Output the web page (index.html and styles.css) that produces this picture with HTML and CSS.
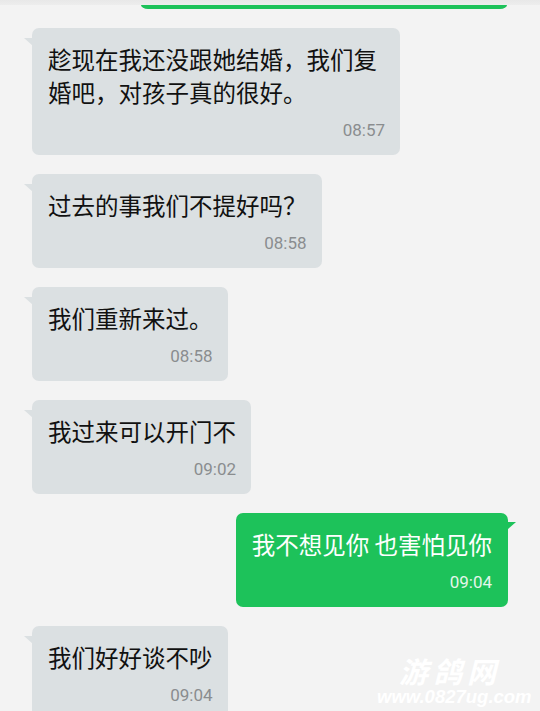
FILE: index.html
```html
<!DOCTYPE html>
<html lang="zh-CN">
<head>
<meta charset="utf-8">
<title>聊天</title>
<link rel="stylesheet" href="styles.css">
</head>
<body>
<div class="screen">
  <div class="topbar"></div>
  <div class="prev-row"><div class="prev-stub"></div></div>
  <div class="list">
    <div class="row in">
      <div class="bubble in">
        <p class="text">趁现在我还没跟她结婚，我们复婚吧，对孩子真的很好。</p>
        <span class="time">08:57</span>
      </div>
    </div>
    <div class="row in">
      <div class="bubble in">
        <p class="text">过去的事我们不提好吗？</p>
        <span class="time">08:58</span>
      </div>
    </div>
    <div class="row in">
      <div class="bubble in">
        <p class="text">我们重新来过。</p>
        <span class="time">08:58</span>
      </div>
    </div>
    <div class="row in">
      <div class="bubble in">
        <p class="text">我过来可以开门不</p>
        <span class="time">09:02</span>
      </div>
    </div>
    <div class="row out">
      <div class="bubble out">
        <p class="text">我不想见你 也害怕见你</p>
        <span class="time">09:04</span>
      </div>
    </div>
    <div class="row in">
      <div class="bubble in">
        <p class="text">我们好好谈不吵</p>
        <span class="time">09:04</span>
      </div>
    </div>
  </div>
  <div class="watermark">
    <div class="wm-name">游鸽网</div>
    <div class="wm-url">www.0827ug.com</div>
  </div>
</div>
</body>
</html>
```
FILE: styles.css
```css
* { box-sizing: border-box; }
html, body {
  margin: 0;
  padding: 0;
  background: #f3f3f3;
}
.screen {
  position: relative;
  width: 540px;
  height: 711px;
  overflow: hidden;
  background: #f3f3f3;
  font-family: "Noto Sans CJK SC", "Noto Sans", sans-serif;
}
.topbar {
  height: 5px;
  background: linear-gradient(#e8e8e8, #ededed);
}
.prev-row {
  display: flex;
  justify-content: flex-end;
  padding-right: 33px;
}
.prev-stub {
  width: 366px;
  height: 4px;
  background: #1dc25a;
  border-radius: 0 0 7px 7px / 0 0 4px 4px;
}
.list {
  display: flex;
  flex-direction: column;
  gap: 19px;
  padding-top: 19px;
}
.row {
  display: flex;
}
.row.in {
  justify-content: flex-start;
  padding-left: 32px;
}
.row.out {
  justify-content: flex-end;
  padding-right: 32px;
}
.bubble {
  position: relative;
  max-width: 368px;
  border-radius: 7px;
  padding: 15px 15px 15px 16px;
  display: flex;
  flex-direction: column;
}
.bubble.in {
  background: #dbe0e2;
  color: #111;
}
.bubble.out {
  background: #1dc25a;
  color: #fff;
  padding-right: 16px;
}
.bubble::before {
  content: "";
  position: absolute;
  top: 10px;
  width: 9px;
  height: 8px;
  background: inherit;
}
.bubble.in::before {
  left: -8px;
  clip-path: polygon(0 0, 100% 0, 100% 100%);
}
.bubble.out::before {
  right: -8px;
  top: 9px;
  clip-path: polygon(0 0, 100% 0, 0 100%);
}
.text {
  margin: 0;
  font-size: 23.5px;
  line-height: 33px;
}
.time {
  display: block;
  margin-top: 11px;
  text-align: right;
  font-family: Roboto, "Liberation Sans", sans-serif;
  font-size: 17px;
  line-height: 20px;
}
.bubble.in .time { color: #8a8d8f; }
.bubble.out .time { color: #e4f6ea; }

.watermark {
  position: absolute;
  left: 377px;
  top: 654px;
  color: #ffffff;
  font-style: italic;
  font-weight: 700;
}
.wm-name {
  margin-left: 22px;
  font-family: "Noto Sans CJK SC", sans-serif;
  font-size: 29px;
  line-height: 33px;
  letter-spacing: 5px;
}
.wm-url {
  font-family: "Liberation Sans", Arial, sans-serif;
  font-size: 18.5px;
  line-height: 20px;
}
```
